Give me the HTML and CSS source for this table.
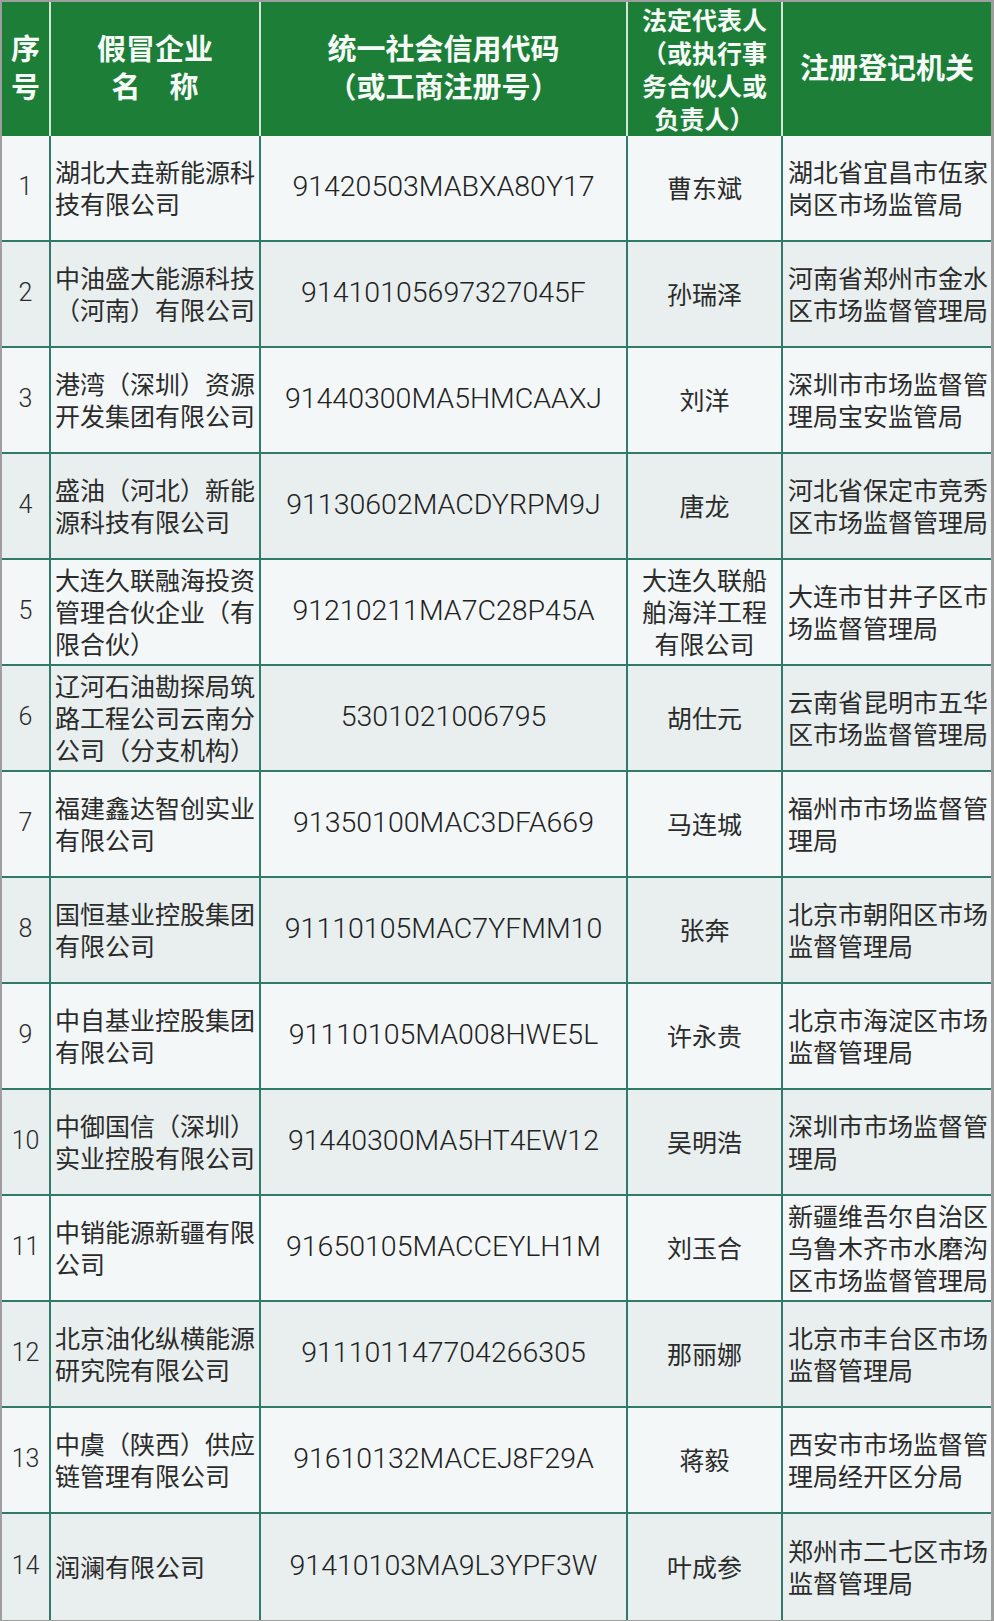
FILE: index.html
```html
<!DOCTYPE html>
<html lang="zh-CN">
<head>
<meta charset="utf-8">
<title>假冒企业名单</title>
<link rel="stylesheet" href="styles.css">
</head>
<body>
<table class="list">
  <colgroup>
    <col class="c-no"><col class="c-name"><col class="c-code"><col class="c-rep"><col class="c-org">
  </colgroup>
  <thead>
    <tr>
      <th class="h-no">序<br>号</th>
      <th>假冒企业<br>名　称</th>
      <th>统一社会信用代码<br>（或工商注册号）</th>
      <th class="h-rep">法定代表人<br>（或执行事<br>务合伙人或<br>负责人）</th>
      <th>注册登记机关</th>
    </tr>
  </thead>
  <tbody>
    <tr><td class="no">1</td><td class="name">湖北大垚新能源科技有限公司</td><td class="code">91420503MABXA80Y17</td><td class="rep">曹东斌</td><td class="org">湖北省宜昌市伍家岗区市场监管局</td></tr>
    <tr><td class="no">2</td><td class="name">中油盛大能源科技（河南）有限公司</td><td class="code">91410105697327045F</td><td class="rep">孙瑞泽</td><td class="org">河南省郑州市金水区市场监督管理局</td></tr>
    <tr><td class="no">3</td><td class="name">港湾（深圳）资源开发集团有限公司</td><td class="code">91440300MA5HMCAAXJ</td><td class="rep">刘洋</td><td class="org">深圳市市场监督管理局宝安监管局</td></tr>
    <tr><td class="no">4</td><td class="name">盛油（河北）新能源科技有限公司</td><td class="code">91130602MACDYRPM9J</td><td class="rep">唐龙</td><td class="org">河北省保定市竞秀区市场监督管理局</td></tr>
    <tr><td class="no">5</td><td class="name">大连久联融海投资管理合伙企业（有限合伙）</td><td class="code">91210211MA7C28P45A</td><td class="rep">大连久联船舶海洋工程有限公司</td><td class="org">大连市甘井子区市场监督管理局</td></tr>
    <tr><td class="no">6</td><td class="name">辽河石油勘探局筑路工程公司云南分公司（分支机构）</td><td class="code">5301021006795</td><td class="rep">胡仕元</td><td class="org">云南省昆明市五华区市场监督管理局</td></tr>
    <tr><td class="no">7</td><td class="name">福建鑫达智创实业有限公司</td><td class="code">91350100MAC3DFA669</td><td class="rep">马连城</td><td class="org">福州市市场监督管理局</td></tr>
    <tr><td class="no">8</td><td class="name">国恒基业控股集团有限公司</td><td class="code">91110105MAC7YFMM10</td><td class="rep">张奔</td><td class="org">北京市朝阳区市场监督管理局</td></tr>
    <tr><td class="no">9</td><td class="name">中自基业控股集团有限公司</td><td class="code">91110105MA008HWE5L</td><td class="rep">许永贵</td><td class="org">北京市海淀区市场监督管理局</td></tr>
    <tr><td class="no">10</td><td class="name">中御国信（深圳）实业控股有限公司</td><td class="code">91440300MA5HT4EW12</td><td class="rep">吴明浩</td><td class="org">深圳市市场监督管理局</td></tr>
    <tr><td class="no">11</td><td class="name">中销能源新疆有限公司</td><td class="code">91650105MACCEYLH1M</td><td class="rep">刘玉合</td><td class="org">新疆维吾尔自治区乌鲁木齐市水磨沟区市场监督管理局</td></tr>
    <tr><td class="no">12</td><td class="name">北京油化纵横能源研究院有限公司</td><td class="code">911101147704266305</td><td class="rep">那丽娜</td><td class="org">北京市丰台区市场监督管理局</td></tr>
    <tr><td class="no">13</td><td class="name">中虞（陕西）供应链管理有限公司</td><td class="code">91610132MACEJ8F29A</td><td class="rep">蒋毅</td><td class="org">西安市市场监督管理局经开区分局</td></tr>
    <tr><td class="no">14</td><td class="name">润澜有限公司</td><td class="code">91410103MA9L3YPF3W</td><td class="rep">叶成参</td><td class="org">郑州市二七区市场监督管理局</td></tr>
  </tbody>
</table>
</body>
</html>
```

FILE: styles.css
```css
html, body {
  margin: 0;
}

body {
  background: #9e9e9e;
  padding: 2px 3px 1px 2px;
  font-family: "Noto Sans CJK SC", "Noto Sans", sans-serif;
  color: #2b2b2b;
}

.list {
  border-collapse: separate;
  border-spacing: 0;
  table-layout: fixed;
  width: 989px;
}

.c-no { width: 49px; }
.c-name { width: 210px; }
.c-code { width: 367px; }
.c-rep { width: 155px; }
.c-org { width: 208px; }

.list th,
.list td {
  padding: 0;
  border-right: 2px solid #2f7a68;
  border-bottom: 2px solid #2f7a68;
  vertical-align: middle;
}

.list th:last-child,
.list td:last-child {
  border-right: none;
}

.list tbody tr:last-child td {
  border-bottom: none;
}

.list thead tr {
  height: 134px;
}

.list th {
  background: #1c7e37;
  color: #f7fbf7;
  font-weight: 700;
  font-size: 29px;
  line-height: 38px;
  text-align: center;
  border-bottom: none;
  border-right-color: #d3e6d7;
  padding-bottom: 6px;
}

.list th.h-rep {
  font-size: 25px;
  line-height: 33px;
  padding-bottom: 0;
}

.list tbody tr {
  height: 106px;
}

.list tbody tr:nth-child(odd) td {
  background: #f3f7f7;
}

.list tbody tr:nth-child(even) td {
  background: #e8efee;
}

.list td {
  font-size: 25px;
  line-height: 32px;
  padding-bottom: 3px;
}

.list td.no {
  text-align: center;
  font-family: Roboto, "Liberation Sans", sans-serif;
  font-weight: 300;
  font-size: 25px;
}

.list td.name {
  text-align: left;
  padding-left: 4px;
}

.list td.code {
  text-align: center;
  font-family: Roboto, "Liberation Sans", sans-serif;
  font-weight: 300;
  font-size: 28.5px;
  color: #222;
}

.list td.rep {
  text-align: center;
  padding-left: 12px;
  padding-right: 12px;
}

.list td.org {
  text-align: left;
  padding-left: 5px;
}
```
